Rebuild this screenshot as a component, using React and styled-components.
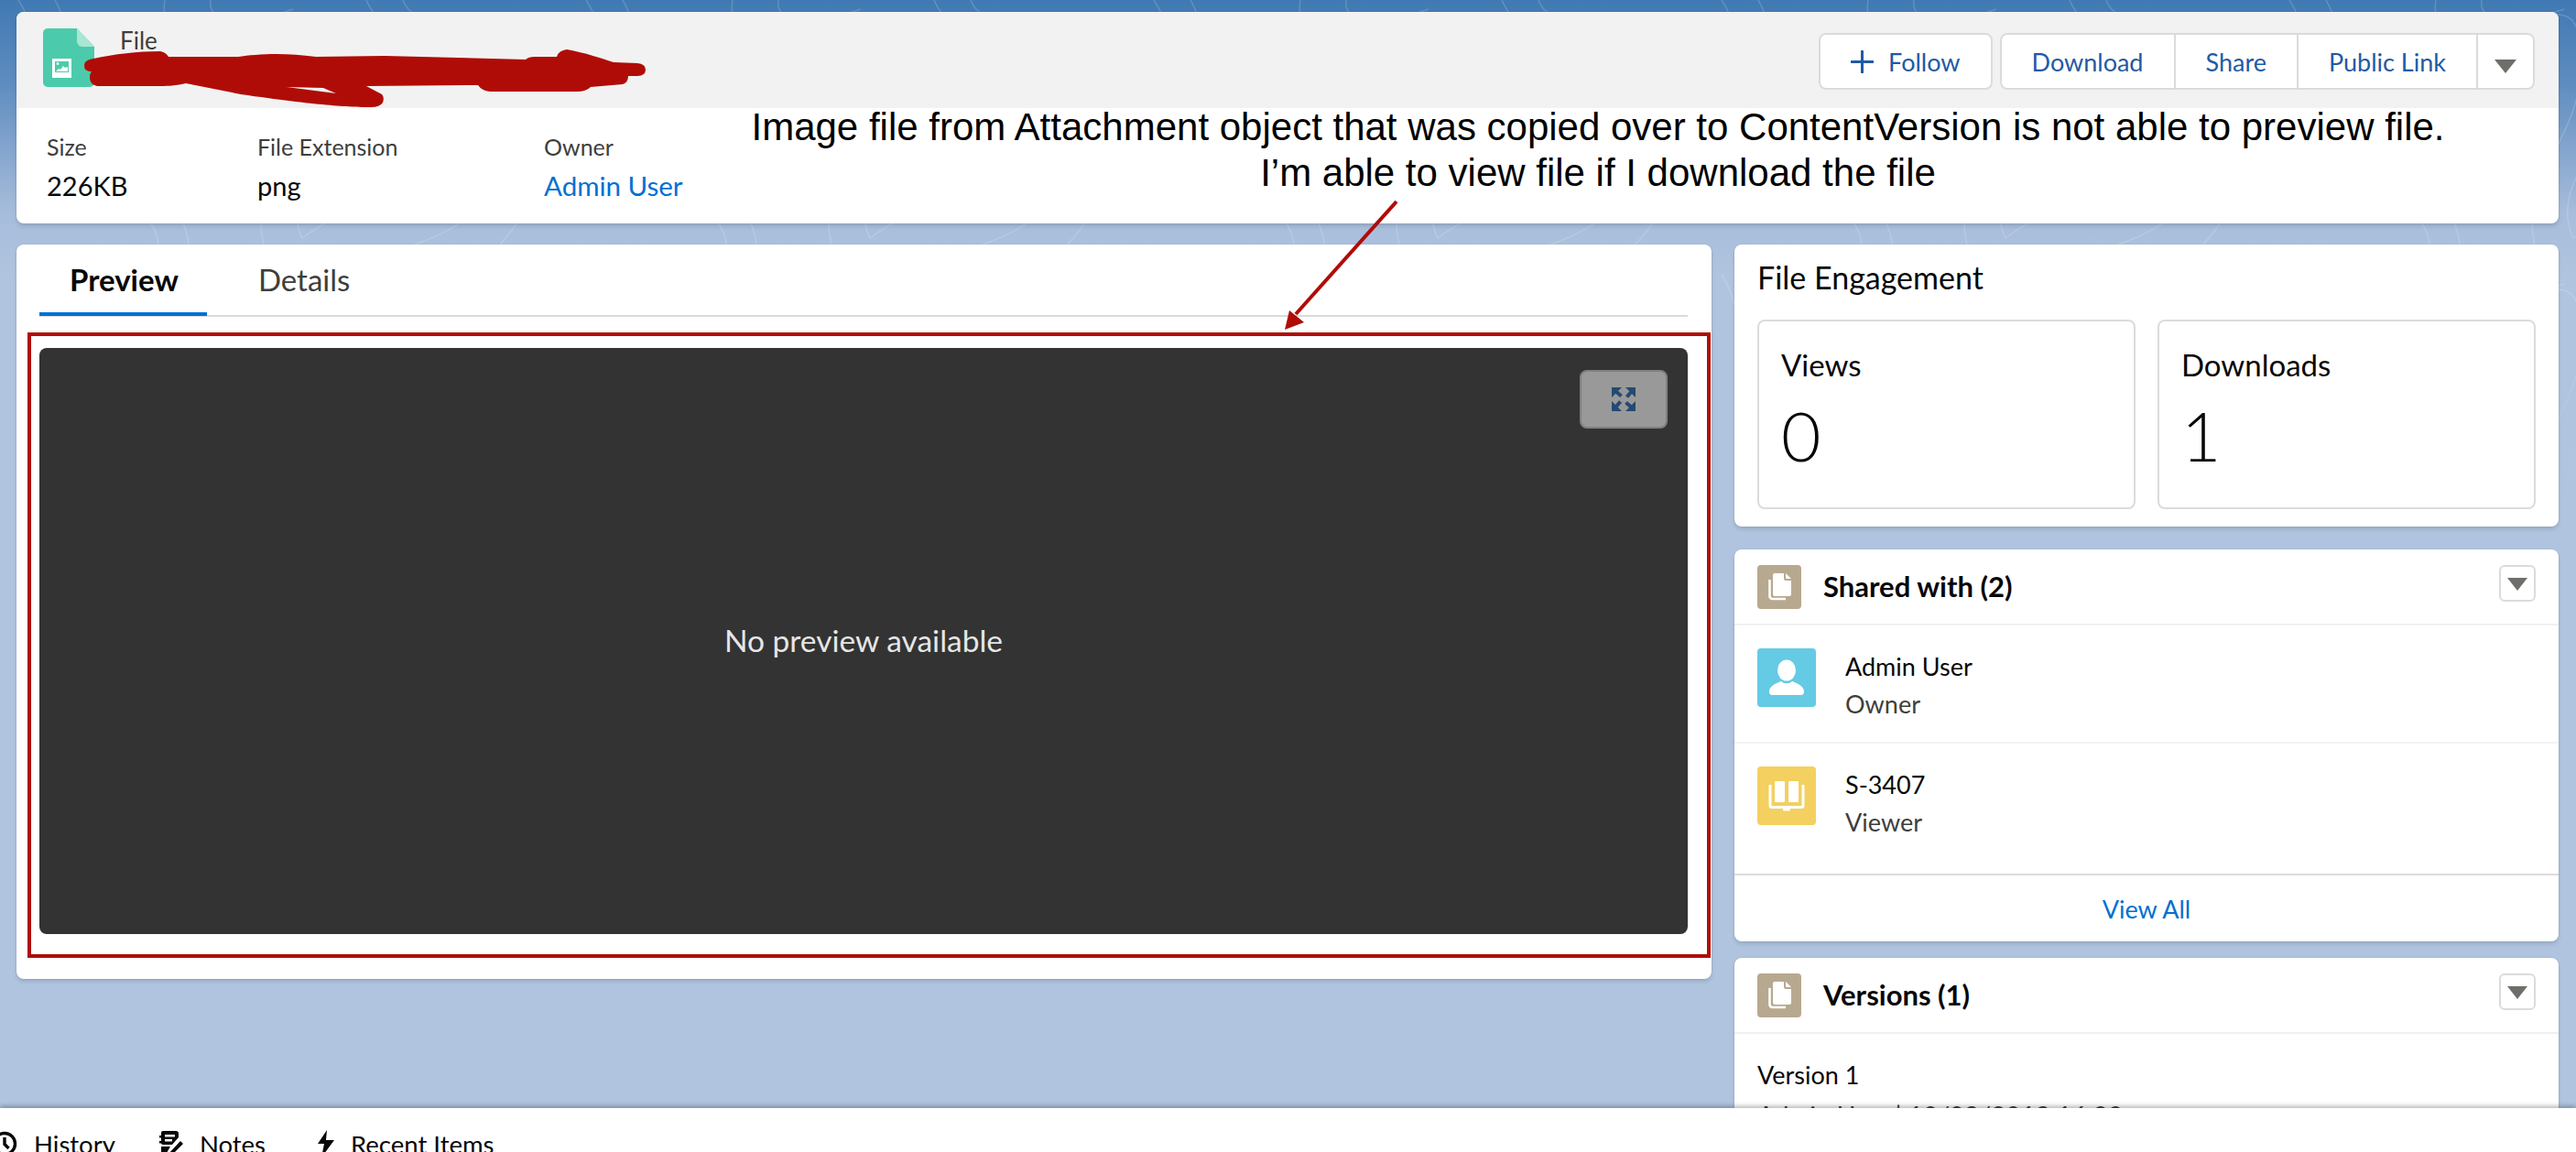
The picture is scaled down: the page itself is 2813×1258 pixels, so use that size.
import React from 'react'
import styled, { createGlobalStyle } from 'styled-components'

const GlobalStyle = createGlobalStyle`
    html, body {
        margin: 0;
        padding: 0;
        overflow: hidden;
    }
    body {
        font-family: Lato, "Open Sans", "Liberation Sans", sans-serif;
        color: #080707;
    }
    * {
        box-sizing: border-box;
    }
`

const RED = '#b00c07'

const FileIcon = () => (
    <svg width="56" height="64" viewBox="0 0 56 64">
        <path d="M5 0H37L56 20V59a5 5 0 0 1-5 5H5a5 5 0 0 1-5-5V5a5 5 0 0 1 5-5Z" fill="#4bcbab" />
        <path d="M37 0L56 20H43a6 6 0 0 1-6-6Z" fill="#a9e6d3" />
        <rect x="10" y="33" width="21" height="21" fill="#fff" />
        <rect x="13" y="36" width="15" height="12" fill="#4bcbab" />
        <path d="M14 47l3-3 2 1 3-4 2 2 3-1v5Z" fill="#fff" />
        <circle cx="16" cy="38.5" r="1.4" fill="#fff" />
    </svg>
)

const StackIcon = () => (
    <svg width="48" height="48" viewBox="0 0 48 48">
        <path d="M19 9H29V15a2 2 0 0 0 2 2H37V32a2 2 0 0 1-2 2H19a2 2 0 0 1-2-2V11a2 2 0 0 1 2-2Z" fill="#fff" />
        <path d="M31 9L37 15H32a1 1 0 0 1-1-1Z" fill="#fff" />
        <path d="M13.5 16V34a3 3 0 0 0 3 3H31" fill="none" stroke="#fff" strokeWidth="2.6" />
    </svg>
)

const PersonIcon = () => (
    <svg width="64" height="64" viewBox="0 0 64 64">
        <ellipse cx="32" cy="24" rx="10" ry="11.5" fill="#fff" />
        <path d="M13 47c0-6 8-9 13-11c3 3 9 3 12 0c5 2 13 5 13 11q0 4-3 4H16q-3 0-3-4Z" fill="#fff" />
    </svg>
)

const BookIcon = () => (
    <svg width="64" height="64" viewBox="0 0 64 64">
        <rect x="19" y="16" width="11" height="23" rx="1" fill="#fff" />
        <rect x="34" y="16" width="11" height="23" rx="1" fill="#fff" />
        <path d="M14 20V43q0 1.500 1.500 1.500H48.500q1.500 0 1.500-1.500V20" fill="none" stroke="#fff" strokeWidth="3" />
        <rect x="28" y="44" width="8" height="4.500" rx="1" fill="#fff" />
    </svg>
)

const ExpandIcon = () => (
    <svg width="26" height="26" viewBox="0 0 26 26" fill="#254a72" stroke="#254a72">
        {[0, 90, 180, 270].map((angle) => (
            <g key={angle} transform={`rotate(${angle} 13 13)`}>
                <path d="M0 0H11L0 11Z" strokeWidth="0" />
                <path d="M4 4L10.500 9.500" strokeWidth="4" />
            </g>
        ))}
    </svg>
)

const PlusIcon = () => (
    <svg width="25" height="25" viewBox="0 0 25 25">
        <path d="M12.500 1V24M1 12.500H24" stroke="#1f5aa5" strokeWidth="3" strokeLinecap="round" />
    </svg>
)

const ClockIcon = () => (
    <svg width="28" height="28" viewBox="0 0 28 28" fill="none" stroke="#080707" strokeWidth="3.400">
        <circle cx="14" cy="14" r="11.500" />
        <path d="M14 7V14.500L18.500 19" />
    </svg>
)

const NotesIcon = () => (
    <svg width="26" height="28" viewBox="0 0 26 28" fill="#080707">
        <path d="M4 0H18a3 3 0 0 1 3 3V7L14 15H4a2 2 0 0 1-2-2V2a2 2 0 0 1 2-2Z" />
        <path d="M2 17H12L8 24H4a2 2 0 0 1-2-2Z" />
        <rect x="0" y="5" width="4" height="2.500" />
        <rect x="0" y="11" width="4" height="2.500" />
        <path d="M10 25L23 11L26 14L13 27L9 28Z" />
        <rect x="6" y="4" width="11" height="2.500" fill="#fff" />
        <rect x="6" y="9" width="8" height="2.500" fill="#fff" />
    </svg>
)

const BoltIcon = () => (
    <svg width="20" height="30" viewBox="0 0 20 30" fill="#080707">
        <path d="M12 0L2 15H9L6 30L20 11H11Z" />
    </svg>
)

const Contours = () => (
    <ContourLayer width="2813" height="600">
        <defs>
            <pattern id="contours" width="620" height="300" patternUnits="userSpaceOnUse">
                <g fill="none" stroke="#fff" strokeWidth="1.500">
                    <path d="M20 0C60 60 10 120 70 170S190 230 170 300" />
                    <path d="M60 0C90 50 50 110 100 150S220 220 205 300" />
                    <path d="M180 0C170 60 260 40 300 20S350 60 330 120S260 220 300 300" />
                    <path d="M230 0C225 30 280 25 320 10" />
                    <path d="M400 0C420 50 480 30 520 60S580 180 520 230S420 260 430 300" />
                    <path d="M440 0C450 30 490 15 540 40S620 170 560 250S470 270 470 300" />
                    <path d="M330 260C370 230 430 210 470 180S440 120 390 140S310 220 330 260Z" />
                    <path d="M90 40C130 20 170 50 150 90S90 110 90 40Z" />
                </g>
            </pattern>
        </defs>
        <rect width="2813" height="600" fill="url(#contours)" />
    </ContourLayer>
)

const Annotations = () => (
    <>
        <AnnotationSvg width="2813" height="1258" viewBox="0 0 2813 1258">
            <path
                fillRule="evenodd"
                fill={RED}
                d="M92 72C92 67 96 65 102 64C125 59 150 56 175 56Q181 57 184 62L260 62C280 59 310 57 345 62L420 61L574 65Q577 62 584 62L608 62Q610 55 619 54C640 58 655 63 670 68L696 69Q705 70 705 76Q705 83 696 83L686 83Q686 90 680 92L645 95Q640 100 630 100L535 100Q526 99 522 93L400 94L417 103Q420 106 418 112Q415 117 405 117C380 117 347 115 263 103L203 91C190 94 180 94 173 94L106 94Q98 92 98 85Q98 80 100 78Q92 78 92 72ZM313 95L353 96L367 102Z"
            />
            <line x1="1525" y1="220" x2="1415" y2="343" stroke={RED} strokeWidth="4" />
            <path d="M1403 360L1408 339L1424 352Z" fill={RED} />
        </AnnotationSvg>
        <AnnotationNote>
            <div>Image file from Attachment object that was copied over to ContentVersion is not able to preview file.</div>
            <div>I’m able to view file if I download the file</div>
        </AnnotationNote>
        <RedFrame />
    </>
)

const App = () => {
    return (
        <Page>
            <GlobalStyle />
            <Workspace>
                <Contours />
                <Highlights>
                    <HighlightsHeader>
                        <FileIcon />
                        <TitleBlock>
                            <Eyebrow>File</Eyebrow>
                        </TitleBlock>
                        <Actions>
                            <ButtonGroup>
                                <ActionButton><PlusIcon />Follow</ActionButton>
                            </ButtonGroup>
                            <ButtonGroup>
                                <ActionButton>Download</ActionButton>
                                <ActionButton>Share</ActionButton>
                                <ActionButton>Public Link</ActionButton>
                                <CaretButton><Caret /></CaretButton>
                            </ButtonGroup>
                        </Actions>
                    </HighlightsHeader>
                    <MetaRow>
                        <MetaItem width={230}>
                            <MetaLabel>Size</MetaLabel>
                            <MetaValue>226KB</MetaValue>
                        </MetaItem>
                        <MetaItem width={313}>
                            <MetaLabel>File Extension</MetaLabel>
                            <MetaValue>png</MetaValue>
                        </MetaItem>
                        <MetaItem width={300}>
                            <MetaLabel>Owner</MetaLabel>
                            <MetaLink>Admin User</MetaLink>
                        </MetaItem>
                    </MetaRow>
                </Highlights>

                <Columns>
                    <PreviewCard>
                        <TabBar>
                            <Tab active>Preview</Tab>
                            <Tab>Details</Tab>
                        </TabBar>
                        <Viewer>
                            <ExpandButton><ExpandIcon /></ExpandButton>
                            <ViewerText>No preview available</ViewerText>
                        </Viewer>
                    </PreviewCard>

                    <Sidebar>
                        <EngagementCard>
                            <EngagementTitle>File Engagement</EngagementTitle>
                            <StatGrid>
                                <StatBox>
                                    <StatLabel>Views</StatLabel>
                                    <StatValue>0</StatValue>
                                </StatBox>
                                <StatBox>
                                    <StatLabel>Downloads</StatLabel>
                                    <StatValue>1</StatValue>
                                </StatBox>
                            </StatGrid>
                        </EngagementCard>

                        <Card>
                            <CardHeader>
                                <IconTile color="#b7a98f" size={48}><StackIcon /></IconTile>
                                <CardTitle>Shared with (2)</CardTitle>
                                <ToggleButton><Caret small /></ToggleButton>
                            </CardHeader>
                            <ShareRow>
                                <IconTile color="#65cae4" size={64}><PersonIcon /></IconTile>
                                <ShareText>
                                    <ShareName>Admin User</ShareName>
                                    <ShareRole>Owner</ShareRole>
                                </ShareText>
                            </ShareRow>
                            <ShareRow last>
                                <IconTile color="#f3d05f" size={64}><BookIcon /></IconTile>
                                <ShareText>
                                    <ShareName>S-3407</ShareName>
                                    <ShareRole>Viewer</ShareRole>
                                </ShareText>
                            </ShareRow>
                            <CardFooter>View All</CardFooter>
                        </Card>

                        <Card>
                            <CardHeader>
                                <IconTile color="#b7a98f" size={48}><StackIcon /></IconTile>
                                <CardTitle>Versions (1)</CardTitle>
                                <ToggleButton><Caret small /></ToggleButton>
                            </CardHeader>
                            <VersionBody>
                                <ShareName>Version 1</ShareName>
                                <VersionMeta>Admin User | 10/09/2019 16:23</VersionMeta>
                            </VersionBody>
                        </Card>
                    </Sidebar>
                </Columns>
            </Workspace>

            <UtilityBar>
                <UtilityItem offset={-21}><ClockIcon />History</UtilityItem>
                <UtilityItem offset={2}><NotesIcon />Notes</UtilityItem>
                <UtilityItem offset={9}><BoltIcon />Recent Items</UtilityItem>
            </UtilityBar>

            <Annotations />
        </Page>
    )
}

const Page = styled.div`
    position: relative;
    width: 2813px;
    height: 1258px;
    overflow: hidden;
    display: flex;
    flex-direction: column;
`

const Workspace = styled.main`
    position: relative;
    flex: 0 0 1210px;
    padding: 13px 19px 0 18px;
    overflow: hidden;
    background: linear-gradient(180deg, #4079b3 0, #5e8cc0 90px, #a6bcdb 230px, #b0c4df 300px);
`

const ContourLayer = styled.svg`
    position: absolute;
    top: 0;
    left: 0;
    opacity: 0.16;
    -webkit-mask-image: linear-gradient(180deg, #000 0, #000 300px, transparent 560px);
    mask-image: linear-gradient(180deg, #000 0, #000 300px, transparent 560px);
`

const Panel = styled.section`
    position: relative;
    background: #fff;
    border-radius: 8px;
    box-shadow: 0 0 0 1px rgba(0, 0, 0, 0.04), 0 3px 4px rgba(0, 0, 0, 0.12);
`

const Highlights = styled(Panel)`
    height: 231px;
    overflow: hidden;
`

const HighlightsHeader = styled.header`
    height: 105px;
    background: #f2f2f2;
    display: flex;
    align-items: flex-start;
    padding: 18px 26px 0 29px;
`

const TitleBlock = styled.div`
    margin: -3px 0 0 28px;
`

const Eyebrow = styled.div`
    font-size: 26px;
    line-height: 32px;
    color: #3e3e3c;
`

const Actions = styled.div`
    margin-left: auto;
    margin-top: 5px;
    display: flex;
    gap: 8px;
`

const ButtonGroup = styled.div`
    display: flex;
    height: 62px;
    background: #fff;
    border: 2px solid #dddbda;
    border-radius: 8px;
`

const ActionButton = styled.div`
    display: flex;
    align-items: center;
    gap: 16px;
    padding: 0 33px;
    font-size: 27px;
    color: #1f5aa5;
    white-space: nowrap;
    & + & {
        border-left: 2px solid #dddbda;
    }
`

const CaretButton = styled.div`
    width: 62px;
    display: flex;
    align-items: center;
    justify-content: center;
    border-left: 2px solid #dddbda;
`

const Caret = styled.span`
    display: block;
    margin-top: ${(props) => (props.small ? 2 : 10)}px;
    width: 0;
    height: 0;
    border-left: ${(props) => (props.small ? 11 : 12)}px solid transparent;
    border-right: ${(props) => (props.small ? 11 : 12)}px solid transparent;
    border-top: ${(props) => (props.small ? 14 : 15)}px solid #706e6b;
`

const MetaRow = styled.div`
    display: flex;
    padding: 25px 0 0 33px;
`

const MetaItem = styled.div`
    width: ${(props) => props.width}px;
`

const MetaLabel = styled.div`
    font-size: 25px;
    line-height: 34px;
    color: #3e3e3c;
`

const MetaValue = styled.div`
    margin-top: 8px;
    font-size: 29px;
    line-height: 36px;
`

const MetaLink = styled(MetaValue)`
    font-size: 29.500px;
    color: #0070d2;
`

const Columns = styled.div`
    display: grid;
    grid-template-columns: 1851px 900px;
    gap: 25px;
    margin-top: 23px;
    align-items: start;
`

const PreviewCard = styled(Panel)`
    height: 802px;
    padding: 0 26px 0 25px;
`

const TabBar = styled.nav`
    display: flex;
    height: 79px;
    border-bottom: 2px solid #dddbda;
`

const Tab = styled.div`
    height: 78px;
    padding: ${(props) => (props.active ? '2px 31px 0 33px' : '2px 56px 0')};
    display: flex;
    align-items: center;
    font-size: 33px;
    font-weight: ${(props) => (props.active ? 700 : 400)};
    color: ${(props) => (props.active ? '#080707' : '#3e3e3c')};
    border-bottom: 4px solid ${(props) => (props.active ? '#0070d2' : 'transparent')};
`

const Viewer = styled.div`
    position: relative;
    margin-top: 34px;
    height: 640px;
    background: #333;
    border-radius: 8px;
    display: flex;
    align-items: center;
    justify-content: center;
`

const ViewerText = styled.div`
    margin-bottom: 2px;
    font-size: 33.500px;
    color: #e6e6e6;
`

const ExpandButton = styled.div`
    position: absolute;
    top: 24px;
    right: 22px;
    width: 96px;
    height: 64px;
    background: #999;
    border: 2px solid #808080;
    border-radius: 8px;
    display: flex;
    align-items: center;
    justify-content: center;
`

const Sidebar = styled.aside`
    display: flex;
    flex-direction: column;
    gap: 18px;
`

const Card = styled(Panel)`
    flex: none;
`

const EngagementCard = styled(Panel)`
    height: 308px;
    margin-bottom: 7px;
    padding: 0 25px;
`

const EngagementTitle = styled.h2`
    margin: 0;
    padding-top: 15px;
    height: 82px;
    font-size: 34px;
    line-height: 42px;
    font-weight: 400;
`

const StatGrid = styled.div`
    display: grid;
    grid-template-columns: 1fr 1fr;
    gap: 24px;
`

const StatBox = styled.div`
    height: 207px;
    border: 2px solid #dddbda;
    border-radius: 8px;
    padding: 26px 24px 0;
`

const StatLabel = styled.div`
    font-size: 33px;
    line-height: 42px;
`

const StatValue = styled.div`
    margin-top: 16px;
    font-size: 75px;
    line-height: 80px;
    font-weight: 300;
`

const CardHeader = styled.header`
    height: 83px;
    padding: 17px 25px 0;
    display: flex;
    align-items: flex-start;
    border-bottom: 2px solid #f0f0f0;
`

const IconTile = styled.div`
    flex: none;
    width: ${(props) => props.size}px;
    height: ${(props) => props.size}px;
    background: ${(props) => props.color};
    border-radius: 4px;
`

const CardTitle = styled.h3`
    margin: 0 0 0 24px;
    font-size: 31px;
    line-height: 46px;
    font-weight: 700;
`

const ToggleButton = styled.div`
    margin-left: auto;
    width: 40px;
    height: 40px;
    border: 2px solid #dddbda;
    border-radius: 6px;
    display: flex;
    align-items: center;
    justify-content: center;
`

const ShareRow = styled.div`
    height: ${(props) => (props.last ? 142 : 129)}px;
    padding: 25px 25px 0;
    display: flex;
    align-items: flex-start;
    border-bottom: ${(props) => (props.last ? 'none' : '2px solid #f3f3f3')};
`

const ShareText = styled.div`
    margin-left: 32px;
`

const ShareName = styled.div`
    font-size: 27px;
    line-height: 40px;
`

const ShareRole = styled.div`
    margin-top: 1px;
    font-size: 27px;
    line-height: 40px;
    color: #3e3e3c;
`

const CardFooter = styled.div`
    height: 74px;
    border-top: 2px solid #dddbda;
    display: flex;
    align-items: center;
    justify-content: center;
    font-size: 27px;
    color: #0070d2;
`

const VersionBody = styled.div`
    padding: 25px 25px 40px;
`

const VersionMeta = styled.div`
    margin-top: 4px;
    font-size: 28px;
    line-height: 40px;
    color: #3e3e3c;
`

const UtilityBar = styled.footer`
    position: relative;
    z-index: 2;
    flex: 0 0 48px;
    background: #fff;
    box-shadow: 0 -2px 5px rgba(0, 0, 0, 0.3);
    display: flex;
    gap: 22px;
    padding-top: 22px;
`

const UtilityItem = styled.div`
    display: flex;
    align-items: center;
    gap: 18px;
    height: 34px;
    padding: 0 12px;
    margin-left: ${(props) => props.offset || 0}px;
    font-size: 27.500px;
    white-space: nowrap;
    svg {
        flex: none;
    }
`

const AnnotationSvg = styled.svg`
    position: absolute;
    top: 0;
    left: 0;
    pointer-events: none;
`

const AnnotationNote = styled.div`
    position: absolute;
    top: 114px;
    left: 0;
    width: 3490px;
    text-align: center;
    font-family: "Liberation Sans", Arial, sans-serif;
    font-size: 42px;
    line-height: 50px;
    color: #000;
    pointer-events: none;
`

const RedFrame = styled.div`
    position: absolute;
    top: 363px;
    left: 30px;
    width: 1838px;
    height: 683px;
    border: 4px solid ${RED};
    pointer-events: none;
`

export default App
